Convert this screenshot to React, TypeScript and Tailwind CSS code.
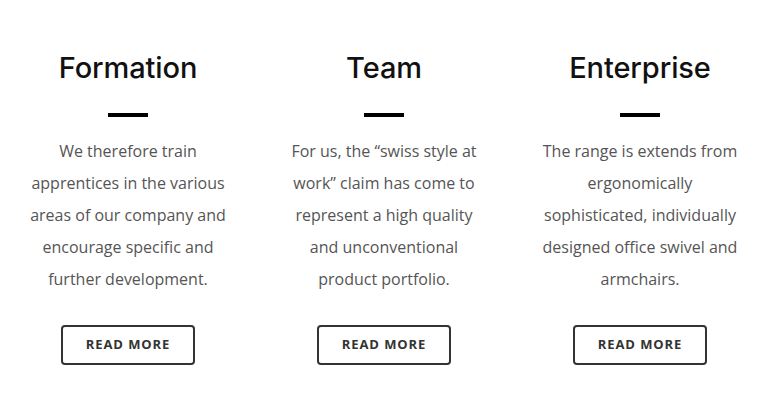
import React from "react";

const items = [
  {
    title: "Formation",
    text: "We therefore train apprentices in the various areas of our company and encourage specific and further development.",
  },
  {
    title: "Team",
    text: "For us, the \u201cswiss style at work\u201d claim has come to represent a high quality and unconventional product portfolio.",
  },
  {
    title: "Enterprise",
    text: "The range is extends from ergonomically sophisticated, individually designed office swivel and armchairs.",
  },
];

export default function App() {
  return (
    <div className="w-[768px] h-[416px] bg-white overflow-hidden">
      <div className="grid grid-cols-3 pt-[50px]">
        {items.map((it) => (
          <div key={it.title} className="flex flex-col items-center px-[26px]">
            <h2
              className="text-[29px] leading-[36px] font-medium text-[#111] tracking-[-0.1px]"
              style={{ fontFamily: "Inter, 'Noto Sans', sans-serif" }}
            >
              {it.title}
            </h2>
            <div className="mt-[27px] w-[40px] h-[4px] bg-black" />
            <p
              className="mt-[18px] text-center text-[16px] leading-[32px] text-[#555]"
              style={{ fontFamily: "'Open Sans', sans-serif" }}
            >
              {it.text}
            </p>
            <button
              className="mt-[30px] w-[134px] h-[40px] border-2 border-[#333] rounded-[4px] text-[13px] font-bold tracking-[0.9px] text-[#333]"
              style={{ fontFamily: "'Open Sans', sans-serif" }}
            >
              READ MORE
            </button>
          </div>
        ))}
      </div>
    </div>
  );
}
